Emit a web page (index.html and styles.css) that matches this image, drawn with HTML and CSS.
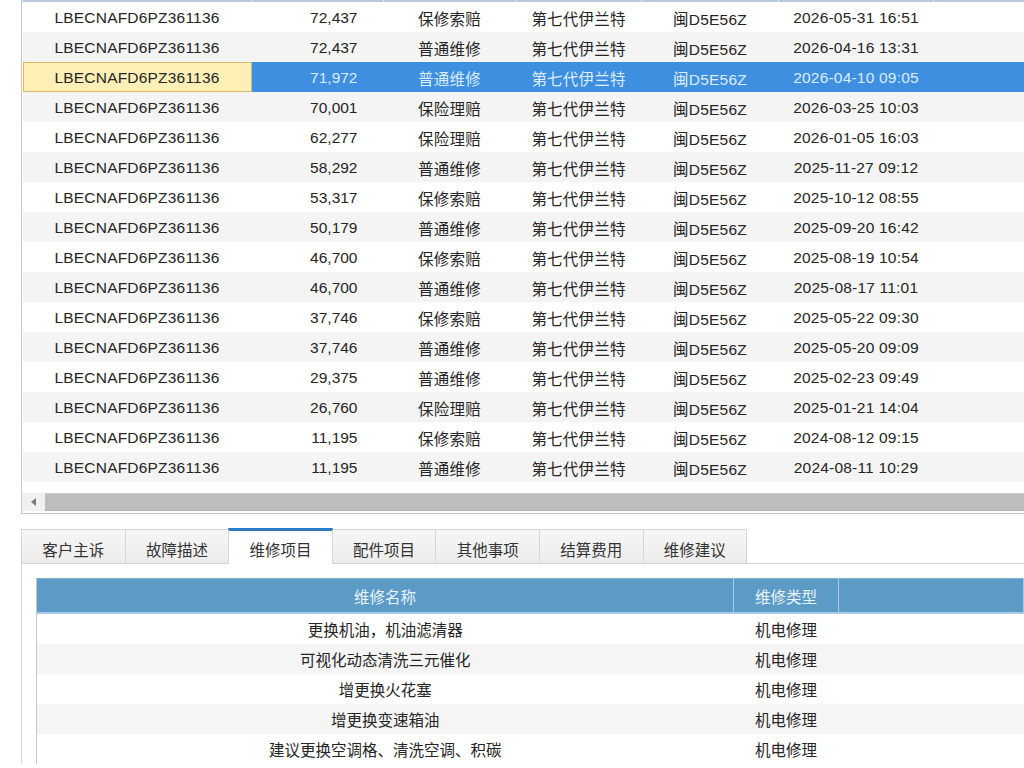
FILE: index.html
```html
<!DOCTYPE html>
<html lang="zh-CN">
<head>
    <meta charset="UTF-8">
    <title>维修记录</title>
    <link rel="stylesheet" href="styles.css">
</head>
<body>
<div class="page">
    <div class="grid">
        <table class="records">
            <colgroup>
                <col style="width:229px"><col style="width:132px"><col style="width:132px">
                <col style="width:126px"><col style="width:137px"><col style="width:155px"><col>
            </colgroup>
            <tr class="edge"><td></td><td></td><td></td><td></td><td></td><td></td><td></td></tr>
            <tr><td>LBECNAFD6PZ361136</td><td class="num">72,437</td><td>保修索赔</td><td>第七代伊兰特</td><td>闽D5E56Z</td><td>2026-05-31 16:51</td><td></td></tr>
            <tr class="alt"><td>LBECNAFD6PZ361136</td><td class="num">72,437</td><td>普通维修</td><td>第七代伊兰特</td><td>闽D5E56Z</td><td>2026-04-16 13:31</td><td></td></tr>
            <tr class="selected"><td class="current">LBECNAFD6PZ361136</td><td class="num">71,972</td><td>普通维修</td><td>第七代伊兰特</td><td>闽D5E56Z</td><td>2026-04-10 09:05</td><td></td></tr>
            <tr class="alt"><td>LBECNAFD6PZ361136</td><td class="num">70,001</td><td>保险理赔</td><td>第七代伊兰特</td><td>闽D5E56Z</td><td>2026-03-25 10:03</td><td></td></tr>
            <tr><td>LBECNAFD6PZ361136</td><td class="num">62,277</td><td>保险理赔</td><td>第七代伊兰特</td><td>闽D5E56Z</td><td>2026-01-05 16:03</td><td></td></tr>
            <tr class="alt"><td>LBECNAFD6PZ361136</td><td class="num">58,292</td><td>普通维修</td><td>第七代伊兰特</td><td>闽D5E56Z</td><td>2025-11-27 09:12</td><td></td></tr>
            <tr><td>LBECNAFD6PZ361136</td><td class="num">53,317</td><td>保修索赔</td><td>第七代伊兰特</td><td>闽D5E56Z</td><td>2025-10-12 08:55</td><td></td></tr>
            <tr class="alt"><td>LBECNAFD6PZ361136</td><td class="num">50,179</td><td>普通维修</td><td>第七代伊兰特</td><td>闽D5E56Z</td><td>2025-09-20 16:42</td><td></td></tr>
            <tr><td>LBECNAFD6PZ361136</td><td class="num">46,700</td><td>保修索赔</td><td>第七代伊兰特</td><td>闽D5E56Z</td><td>2025-08-19 10:54</td><td></td></tr>
            <tr class="alt"><td>LBECNAFD6PZ361136</td><td class="num">46,700</td><td>普通维修</td><td>第七代伊兰特</td><td>闽D5E56Z</td><td>2025-08-17 11:01</td><td></td></tr>
            <tr><td>LBECNAFD6PZ361136</td><td class="num">37,746</td><td>保修索赔</td><td>第七代伊兰特</td><td>闽D5E56Z</td><td>2025-05-22 09:30</td><td></td></tr>
            <tr class="alt"><td>LBECNAFD6PZ361136</td><td class="num">37,746</td><td>普通维修</td><td>第七代伊兰特</td><td>闽D5E56Z</td><td>2025-05-20 09:09</td><td></td></tr>
            <tr><td>LBECNAFD6PZ361136</td><td class="num">29,375</td><td>普通维修</td><td>第七代伊兰特</td><td>闽D5E56Z</td><td>2025-02-23 09:49</td><td></td></tr>
            <tr class="alt"><td>LBECNAFD6PZ361136</td><td class="num">26,760</td><td>保险理赔</td><td>第七代伊兰特</td><td>闽D5E56Z</td><td>2025-01-21 14:04</td><td></td></tr>
            <tr><td>LBECNAFD6PZ361136</td><td class="num">11,195</td><td>保修索赔</td><td>第七代伊兰特</td><td>闽D5E56Z</td><td>2024-08-12 09:15</td><td></td></tr>
            <tr class="alt"><td>LBECNAFD6PZ361136</td><td class="num">11,195</td><td>普通维修</td><td>第七代伊兰特</td><td>闽D5E56Z</td><td>2024-08-11 10:29</td><td></td></tr>
        </table>
        <div class="hscroll">
            <div class="hscroll-btn"><span class="arrow-left"></span></div>
            <div class="hscroll-thumb"></div>
        </div>
    </div>

    <div class="tabs">
        <div class="tab">客户主诉</div>
        <div class="tab">故障描述</div>
        <div class="tab active">维修项目</div>
        <div class="tab">配件项目</div>
        <div class="tab">其他事项</div>
        <div class="tab">结算费用</div>
        <div class="tab">维修建议</div>
    </div>

    <div class="panel">
        <table class="items">
            <colgroup>
                <col style="width:697px"><col style="width:105px"><col>
            </colgroup>
            <tr class="items-head"><th>维修名称</th><th>维修类型</th><th></th></tr>
            <tr><td>更换机油，机油滤清器</td><td>机电修理</td><td></td></tr>
            <tr class="alt"><td>可视化动态清洗三元催化</td><td>机电修理</td><td></td></tr>
            <tr><td>增更换火花塞</td><td>机电修理</td><td></td></tr>
            <tr class="alt"><td>增更换变速箱油</td><td>机电修理</td><td></td></tr>
            <tr><td>建议更换空调格、清洗空调、积碳</td><td>机电修理</td><td></td></tr>
        </table>
    </div>
</div>
</body>
</html>
```

FILE: styles.css
```css
body {
    margin: 0;
    background: #fff;
    color: #252525;
    font-family: "Liberation Sans", "Noto Sans CJK SC", sans-serif;
    font-size: 15.5px;
}

.page {
    padding-left: 21px;
    overflow: hidden;
}

/* upper record grid */
.grid {
    border-left: 1px solid #c9c9c9;
    border-bottom: 1px solid #c9c9c9;
}

.records {
    width: 100%;
    border-collapse: collapse;
    table-layout: fixed;
}

.records td {
    height: 28px;
    padding: 2px 0 0;
    text-align: center;
    white-space: nowrap;
    overflow: hidden;
    background: #fff;
    letter-spacing: 0.2px;
}

.records .edge td {
    height: 2px;
    padding: 0;
    background: #b7c9db;
    border-left: 1px solid #e4edf6;
}

.records tr.alt td {
    background: #f4f4f4;
}

.records td.num {
    text-align: right;
    padding-right: 26px;
    letter-spacing: 0;
}

.records tr.selected td {
    background: #3f8fe0;
    color: #dcecfc;
}

.records tr.selected td.current {
    background: #fdefb6;
    color: #252525;
    box-shadow: inset 0 0 0 1px #e3b865;
}

.hscroll {
    display: flex;
    height: 18px;
    margin: 11px 0 2px;
}

.hscroll-btn {
    width: 23px;
    background: #f0f0f0;
    display: flex;
    align-items: center;
    justify-content: center;
}

.arrow-left {
    width: 0;
    height: 0;
    border-top: 4px solid transparent;
    border-bottom: 4px solid transparent;
    border-right: 5px solid #7a7a7a;
}

.hscroll-thumb {
    flex: 1;
    background: #bdbdbd;
    border-top: 1px solid #cfcfcf;
    border-bottom: 1px solid #b0b0b0;
}

/* tabs */
.tabs {
    display: flex;
    align-items: flex-end;
    margin-top: 14px;
    height: 35px;
    border-bottom: 1px solid #d4d4d4;
}

.tab {
    box-sizing: border-box;
    width: 104.6px;
    height: 34px;
    margin-right: -1px;
    padding-top: 5px;
    display: flex;
    align-items: center;
    justify-content: center;
    border: 1px solid #d6d6d6;
    border-bottom: none;
    background: linear-gradient(#f6f6f6, #ececec);
    color: #333;
}

.tab.active {
    height: 36px;
    margin-bottom: -1px;
    padding-top: 3px;
    background: #fff;
    border-top: 3px solid #2c7cc6;
    position: relative;
}

/* lower items grid */
.panel {
    border-left: 1px solid #d6d6d6;
    padding: 14px 0 0 14px;
}

.items {
    width: 100%;
    border-collapse: collapse;
    table-layout: fixed;
    border-left: 1px solid #c6c6c6;
}

.items th {
    height: 33px;
    padding: 0;
    font-weight: normal;
    color: #e9f3fb;
    background: #5b9bc6;
    border-top: 1px solid #7fb4d8;
    border-bottom: 2px solid #a7cce6;
    border-right: 1px solid #a2cae4;
}

.items td {
    height: 30px;
    padding: 0;
    text-align: center;
    white-space: nowrap;
    background: #fff;
}

.items tr.alt td {
    background: #f5f5f5;
}
```
